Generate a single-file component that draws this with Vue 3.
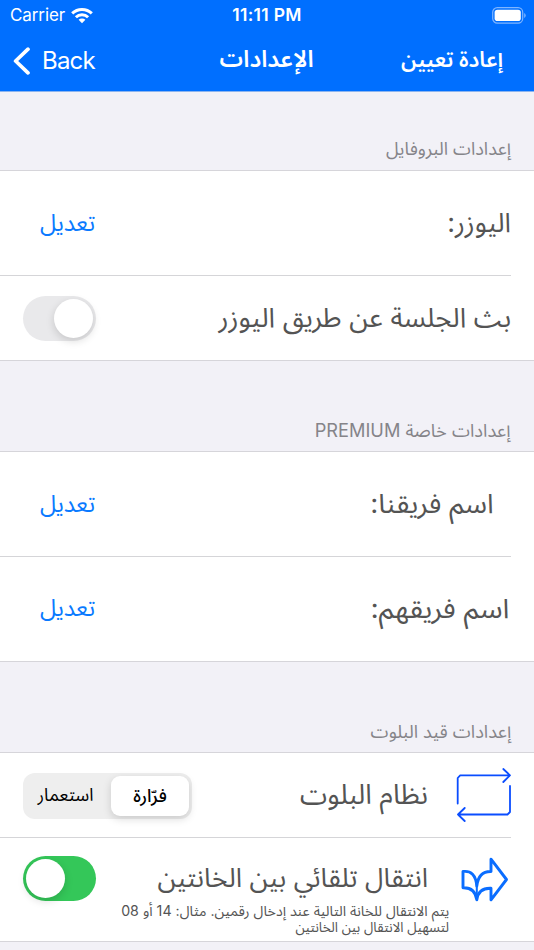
<script setup>
import { ref } from 'vue'

const broadcast = ref(false)
const autoMove = ref(true)
const mode = ref('farrara')
</script>

<template>
  <div class="screen" dir="rtl">
    <header class="top">
      <div class="status" dir="ltr">
        <div class="carrier">
          <span>Carrier</span>
          <svg width="22" height="17" viewBox="0 0 22 17" fill="none" stroke="#fff" stroke-width="3">
            <path d="M1.2 6.4a14 14 0 0 1 19.6 0" />
            <path d="M4.9 10.3a8.7 8.7 0 0 1 12.2 0" />
            <path d="M11 16.2 7.6 12.8a4.9 4.9 0 0 1 6.8 0Z" fill="#fff" stroke="none" />
          </svg>
        </div>
        <span class="clock">11:11 PM</span>
        <svg class="battery" width="34" height="17" viewBox="0 0 34 17">
          <rect x=".7" y=".7" width="30" height="15.4" rx="4.6" fill="none" stroke="#7fb5ff" stroke-width="1.2" />
          <rect x="2.6" y="2.7" width="26.2" height="11.4" rx="2.8" fill="#fff" />
          <path d="M32.2 6v5q1.5-.8 1.5-2.5T32.2 6" fill="#7fb5ff" />
        </svg>
      </div>
      <nav class="nav" dir="ltr">
        <div class="back">
          <svg width="18" height="28" viewBox="0 0 18 28" fill="none" stroke="#fff" stroke-width="3.7" stroke-linecap="round" stroke-linejoin="round"><path d="M15 2.200 2.600 14 15 25.800" /></svg>
          <span>Back</span>
        </div>
        <h1 class="title"><span class="ar">الإعدادات</span></h1>
        <div class="reset"><span class="ar">إعادة تعيين</span></div>
      </nav>
    </header>

    <h2 class="section first"><span class="ar">إعدادات البروفايل</span></h2>
    <section class="group">
      <div class="row tall">
        <span class="ar label">اليوزر:</span>
        <a class="edit"><span class="ar">تعديل</span></a>
      </div>
      <div class="row short">
        <span class="ar label l2">بث الجلسة عن طريق اليوزر</span>
        <div class="switch low" :class="{ on: broadcast }" @click="broadcast = !broadcast"><i class="knob"></i></div>
      </div>
    </section>

    <h2 class="section next"><span class="ar s2">إعدادات خاصة PREMIUM</span></h2>
    <section class="group">
      <div class="row tall">
        <span class="ar label l3">اسم فريقنا:</span>
        <a class="edit"><span class="ar">تعديل</span></a>
      </div>
      <div class="row tall taller">
        <span class="ar label l4">اسم فريقهم:</span>
        <a class="edit"><span class="ar">تعديل</span></a>
      </div>
    </section>

    <h2 class="section next"><span class="ar s3">إعدادات قيد البلوت</span></h2>
    <section class="group">
      <div class="row system">
        <svg class="icon loop" width="56" height="56" viewBox="0 0 56 56" fill="none" stroke="#0a4dff" stroke-width="1.8" stroke-linecap="round" stroke-linejoin="round">
          <path d="M1.700 36.500V11l2.500-2.700H54M47.300 2 54 8.300 47.300 15M54 19v26l-2.500 2.500H2M8.700 41 2 47.500l6.700 6.500" />
        </svg>
        <span class="ar label l5">نظام البلوت</span>
        <div class="segment">
          <div class="option" :class="{ active: mode === 'farrara' }" @click="mode = 'farrara'"><span class="ar">فرّارة</span></div>
          <div class="option" :class="{ active: mode === 'istimar' }" @click="mode = 'istimar'"><span class="ar">استعمار</span></div>
        </div>
      </div>
      <div class="row last">
        <svg class="icon" width="50" height="48" viewBox="0 0 50 48" fill="none" stroke="#0a6dff" stroke-width="2.900" stroke-linejoin="round">
          <path d="M30 3.200 45.500 23.500 30 43.800V32.300C22 32 17 35 15.800 43.800 14.500 35 9.500 31.500 2 31.800V15.500C10 14.500 14.800 19 15.800 30 17 19.500 22 15.300 30 15.500Z" />
          <path d="M15.800 28V43" stroke-width="2" />
        </svg>
        <div class="stack">
          <span class="ar label l6">انتقال تلقائي بين الخانتين</span>
          <p class="hint"><span class="ar h1">يتم الانتقال للخانة التالية عند إدخال رقمين. مثال: 14 أو 08</span><span class="ar h2">لتسهيل الانتقال بين الخانتين</span></p>
        </div>
        <div class="switch" :class="{ on: autoMove }" @click="autoMove = !autoMove"><i class="knob"></i></div>
      </div>
    </section>
  </div>
</template>

<style>
body { margin: 0; background: #f2f1f7; }
</style>
<style scoped>
* { box-sizing: border-box; }
.screen { width: 534px; height: 950px; overflow: hidden; background: #f2f1f7; font-family: Inter, "Noto Sans Arabic", "DejaVu Sans", sans-serif; color: #545454; }
.ar { display: inline-block; white-space: nowrap; transform-origin: right center; }
.top { height: 92px; background: #006fff; border-bottom: 1px solid #8bb4ef; color: #fff; }
.status { height: 30px; display: grid; grid-template-columns: 1fr auto 1fr; align-items: center; padding: 0 8px 0 8px; font-size: 17px; }
.carrier { display: flex; align-items: center; gap: 6px; padding-left: 2px; letter-spacing: -.1px; }
.clock { font-weight: 600; font-size: 17.5px; letter-spacing: .3px; padding-bottom: 2px; }
.battery { justify-self: end; }
.nav { height: 61px; display: grid; grid-template-columns: 1fr auto 1fr; align-items: center; padding: 0 13px; }
.back { display: flex; align-items: center; gap: 11px; font-size: 24px; letter-spacing: -.8px; }
.title, .section { margin: 0; font-weight: 400; }
.title { font-size: 23.5px; font-weight: 600; padding: 0 1px 2px 0; }
.reset { justify-self: end; margin-right: 18px; padding-bottom: 2px; font-size: 21.500px; font-weight: 600; }
.section { display: flex; align-items: flex-end; padding: 0 23px 7px; font-size: 18px; line-height: 28px; color: #858489; }
.first { height: 78px; }
.next { height: 90px; padding-bottom: 6px; }
.s2 { transform: scaleX(1.012); }
.s3 { transform: scaleX(1.01); }
.group { background: #fff; border-top: 1px solid #d6d5da; border-bottom: 1px solid #d6d5da; }
.row { display: flex; align-items: center; padding: 0 23px; position: relative; }
.row + .row::before { content: ""; position: absolute; top: 0; left: 0; right: 23px; border-top: 1px solid #d5d5d8; }
.tall { height: 104px; }
.taller { height: 105px; }
.short { height: 85px; }
.system { height: 84px; }
.last { height: 104px; align-items: flex-start; padding-top: 19px; }
.label { font-size: 27px; line-height: 40px; }
.l2 { font-size: 27.300px; }
.l3 { margin-right: 17px; transform: scaleX(1.04); }
.l4 { margin-right: 2px; transform: scaleX(1.066); }
.l5 { margin-right: 28px; margin-top: -2px; font-size: 27.600px; }
.l6 { font-size: 26.700px; }
.edit { margin-right: auto; margin-left: 17px; color: #0a7aff; font-size: 23.200px; }
.switch { width: 73px; height: 45px; border-radius: 23px; background: #e9e9eb; margin-right: auto; padding: 3px; display: flex; flex: none; }
.low { margin-top: 2px; }
.knob { width: 39px; height: 39px; border-radius: 50%; background: #fff; box-shadow: 0 3px 8px rgba(0,0,0,.15); }
.on { background: #34c759; justify-content: flex-end; }
.icon { flex: none; }
.loop { margin-right: -1px; }
.segment { margin: 2px auto 0 0; width: 169px; height: 46px; border-radius: 12px; background: #eee; padding: 3px; display: flex; color: #000; font-size: 17.800px; }
.option { flex: 1; display: flex; align-items: center; justify-content: center; border-radius: 9px; padding: 0 6px 1px 0; }
.active { flex: 0 0 78px; padding-right: 0; background: #fff; box-shadow: 0 3px 8px rgba(0,0,0,.15); font-weight: 500; font-size: 18px; }
.stack { margin-right: 33px; padding-top: 1px; }
.hint { margin: 6px -21px 0 0; display: flex; flex-direction: column; align-items: flex-start; font-size: 14px; line-height: 16px; }
.h1 { transform: scaleX(1.015); }
.h2 { transform: scaleX(.96); }
</style>
